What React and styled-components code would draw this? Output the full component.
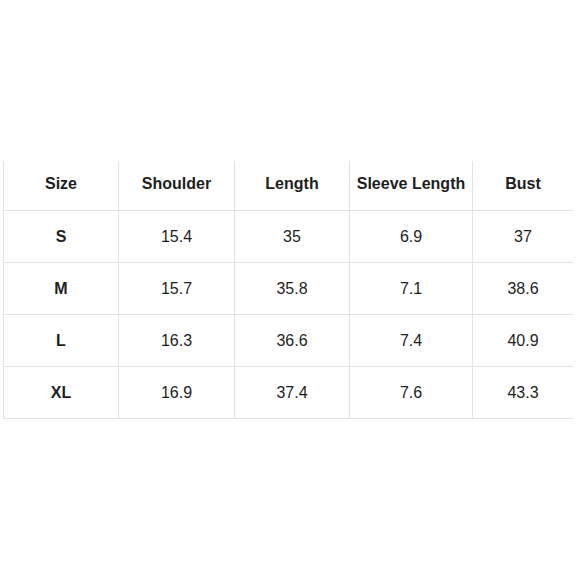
import React from 'react'
import styled, { createGlobalStyle } from 'styled-components'

const Global = createGlobalStyle`
  html, body {
    margin: 0;
    padding: 0;
    background: #fff;
  }
  body {
    font-family: "Liberation Sans", Arial, sans-serif;
    color: #1e1e1e;
  }
`

const Page = styled.div`
  width: 580px;
  height: 580px;
  padding: 161px 0 0 3px;
  box-sizing: border-box;
`

const Grid = styled.div`
  display: grid;
  grid-template-columns: 115px 116px 115px 123px 101px;
  width: 570px;
`

const Cell = styled.div`
  height: ${p => (p.$head ? 50 : 52)}px;
  box-sizing: border-box;
  display: flex;
  align-items: center;
  justify-content: center;
  border-left: 1px solid #e2e2e2;
  border-bottom: 1px solid #e2e2e2;
  font-size: 16px;
  font-weight: ${p => (p.$bold ? 700 : 400)};
  padding-bottom: ${p => (p.$head ? 3 : 0)}px;
`

const head = ['Size', 'Shoulder', 'Length', 'Sleeve Length', 'Bust']
const rows = [
  ['S', '15.4', '35', '6.9', '37'],
  ['M', '15.7', '35.8', '7.1', '38.6'],
  ['L', '16.3', '36.6', '7.4', '40.9'],
  ['XL', '16.9', '37.4', '7.6', '43.3'],
]

export default function App() {
  return (
    <>
      <Global />
      <Page>
        <Grid>
          {head.map(h => (
            <Cell key={h} $head $bold>{h}</Cell>
          ))}
          {rows.map(r =>
            r.map((v, i) => (
              <Cell key={r[0] + i} $bold={i === 0}>{v}</Cell>
            ))
          )}
        </Grid>
      </Page>
    </>
  )
}
